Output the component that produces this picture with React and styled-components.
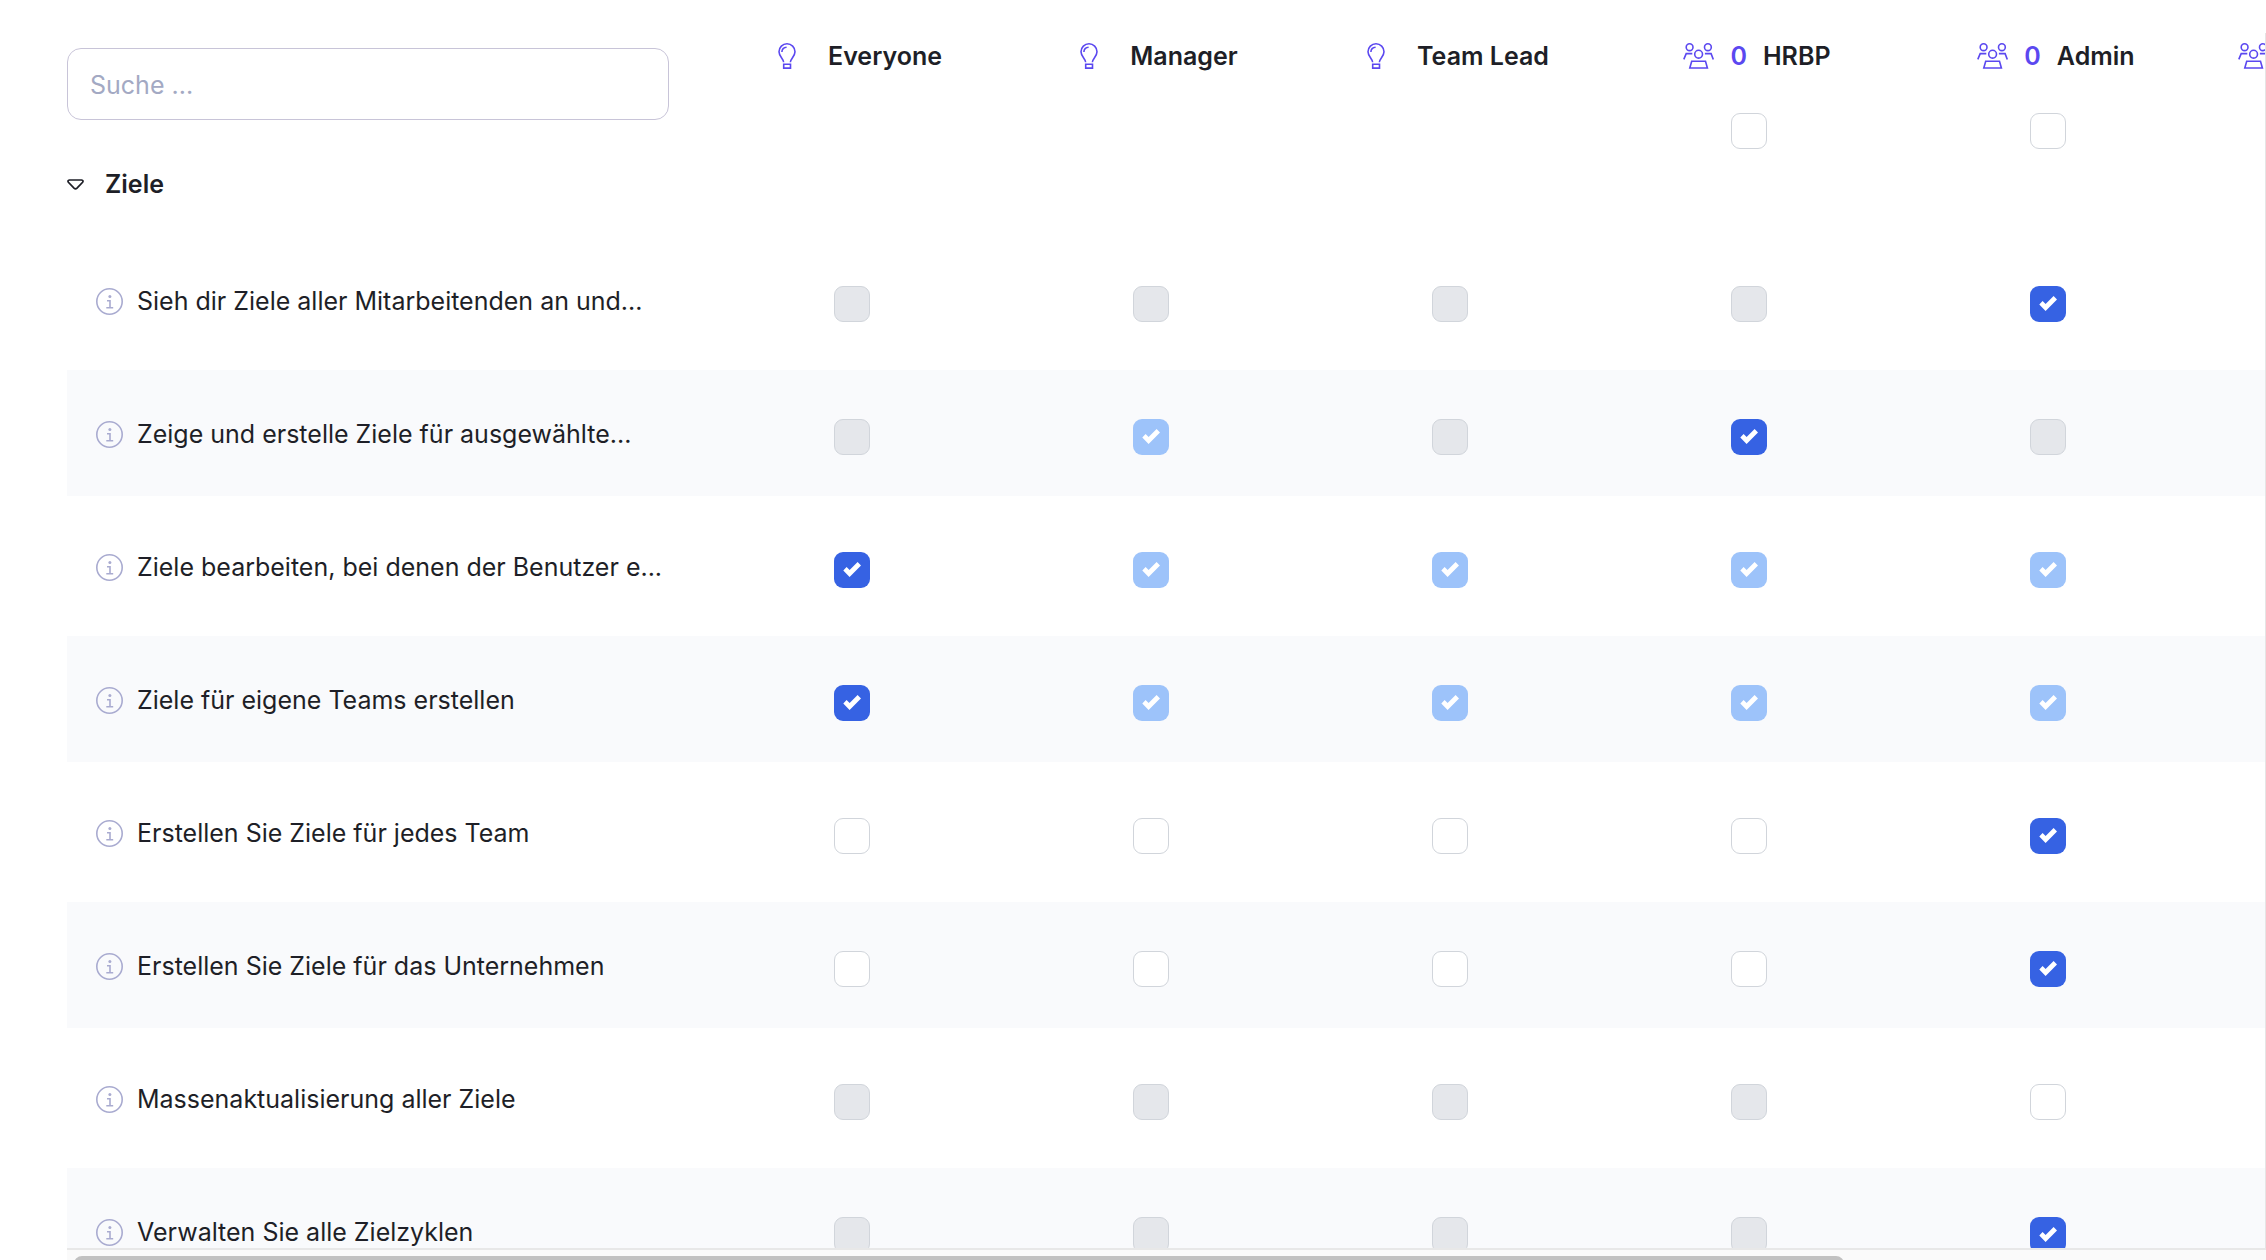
import React, {useState} from "react";
//Styled
import styled, {createGlobalStyle} from "styled-components";

//cell states: on / off can be changed, lockedOn / lockedOff are inherited
const roles = [
    {id: "everyone", name: "Everyone", type: "default"},
    {id: "manager", name: "Manager", type: "default"},
    {id: "teamlead", name: "Team Lead", type: "default"},
    {id: "hrbp", name: "HRBP", type: "custom", count: 0},
    {id: "admin", name: "Admin", type: "custom", count: 0},
    {id: "assistant", name: "HR Assistant", type: "custom", count: 0},
];

const permissions = [
    {
        name: "Sieh dir Ziele aller Mitarbeitenden an und...",
        cells: ["lockedOff", "lockedOff", "lockedOff", "lockedOff", "on", "off"],
    },
    {
        name: "Zeige und erstelle Ziele für ausgewählte...",
        cells: ["lockedOff", "lockedOn", "lockedOff", "on", "lockedOff", "off"],
    },
    {
        name: "Ziele bearbeiten, bei denen der Benutzer e...",
        cells: ["on", "lockedOn", "lockedOn", "lockedOn", "lockedOn", "lockedOn"],
    },
    {
        name: "Ziele für eigene Teams erstellen",
        cells: ["on", "lockedOn", "lockedOn", "lockedOn", "lockedOn", "lockedOn"],
    },
    {
        name: "Erstellen Sie Ziele für jedes Team",
        cells: ["off", "off", "off", "off", "on", "off"],
    },
    {
        name: "Erstellen Sie Ziele für das Unternehmen",
        cells: ["off", "off", "off", "off", "on", "off"],
    },
    {
        name: "Massenaktualisierung aller Ziele",
        cells: ["lockedOff", "lockedOff", "lockedOff", "lockedOff", "off", "off"],
    },
    {
        name: "Verwalten Sie alle Zielzyklen",
        cells: ["lockedOff", "lockedOff", "lockedOff", "lockedOff", "on", "off"],
    },
];

//Icons
const BulbIcon = () => (
    <svg width="18" height="26" viewBox="0 0 18 26" fill="none" stroke="currentColor" strokeWidth="1.6" aria-hidden="true">
        <path d="M5.600 19.200C5.400 15.600 1 13.400 1 8.800a8 8 0 0 1 16 0c0 4.600-4.400 6.800-4.600 10.400" />
        <path d="M3.900 9c.1-2.600 2-4.600 4.700-4.800" />
        <path d="M5.700 21.200h6.800v3.900H5.700z" />
    </svg>
);

const GroupIcon = () => (
    <svg width="31" height="26" viewBox="0 0 31 26" fill="none" stroke="currentColor" strokeWidth="1.6" aria-hidden="true">
        <circle cx="6.6" cy="4.2" r="3.4" />
        <circle cx="24.9" cy="4.2" r="3.4" />
        <circle cx="15.6" cy="11.2" r="3.9" />
        <path d="M9.300 10.600H3.200L.8 16.400" />
        <path d="M21.900 10.600h6.200l2.200 5.800" />
        <path d="M8.700 18.300h13.800l1.900 6.700H6.800z" />
    </svg>
);

const InfoIcon = () => (
    <svg width="27" height="27" viewBox="0 0 27 27" fill="none" stroke="currentColor" strokeWidth="1.6" aria-hidden="true">
        <circle cx="13.5" cy="13.5" r="12.7" />
        <path d="M11 12.800h3v6.800M10.300 19.700h6.900" />
        <circle cx="13.9" cy="8.4" r="1.5" fill="currentColor" stroke="none" />
    </svg>
);

const TriangleIcon = () => (
    <svg width="17" height="11" viewBox="0 0 17 11" fill="none" stroke="currentColor" strokeWidth="1.7" aria-hidden="true">
        <path d="M2.400 1h12.200q2.200.5 1 2.300L10 9.200q-1.500 1.400-3 0L1.400 3.300Q.2 1.500 2.400 1z" />
    </svg>
);

const App = () => {
    const [search, setSearch] = useState("");
    const [open, setOpen] = useState(true);

    const rows = permissions.filter((permission) =>
        permission.name.toLowerCase().includes(search.toLowerCase())
    );

    return(
        <>
        <GlobalStyle />
        <Page>
            <Viewport>
                <Table>
                    <colgroup>
                        <NameCol />
                        {roles.map(role => <RoleCol key={role.id} />)}
                    </colgroup>
                    <thead>
                        <HeadRow>
                            <SearchCell>
                                <Search
                                type="search"
                                aria-label="Suche"
                                placeholder="Suche ..."
                                value={search}
                                onChange={(e) => setSearch(e.target.value)} />
                            </SearchCell>
                            {roles.map(role => (
                                <RoleCell key={role.id} scope="col">
                                    <Role>
                                        {role.type === "custom" ? <GroupIcon /> : <BulbIcon />}
                                        <Count>{role.count}</Count>
                                        <span>{role.name}</span>
                                    </Role>
                                    {role.type === "custom" && (
                                        <Checkbox aria-label={`Alle Rechte für ${role.name}`} />
                                    )}
                                </RoleCell>
                            ))}
                        </HeadRow>
                    </thead>
                    <tbody>
                        <GroupRow>
                            <th scope="rowgroup" colSpan={roles.length + 1}>
                                <GroupToggle type="button" aria-expanded={open} onClick={() => setOpen(!open)}>
                                    <TriangleIcon />
                                    Ziele
                                </GroupToggle>
                            </th>
                        </GroupRow>
                        {open && rows.map((permission, index) => (
                            <PermissionRow key={permission.name} $striped={index % 2 === 1}>
                                <th scope="row">
                                    <PermissionName>
                                        <InfoIcon />
                                        {permission.name}
                                    </PermissionName>
                                </th>
                                {permission.cells.map((state, i) => (
                                    <td key={roles[i].id}>
                                        <Checkbox
                                        aria-label={`${permission.name} ${roles[i].name}`}
                                        defaultChecked={state === "on" || state === "lockedOn"}
                                        disabled={state.startsWith("locked")} />
                                    </td>
                                ))}
                            </PermissionRow>
                        ))}
                    </tbody>
                </Table>
            </Viewport>
            <ScrollTrack aria-hidden="true">
                <ScrollThumb />
            </ScrollTrack>
        </Page>
        </>
    )
}

const GlobalStyle = createGlobalStyle`
    *{
        box-sizing: border-box;
    }
    body{
        margin: 0;
        background: #ffffff;
        color: #1e1f27;
        font-family: Inter, "Liberation Sans", sans-serif;
        font-size: 25px;
        line-height: 30px;
    }
`;

const Page = styled.main`
    display: flex;
    flex-direction: column;
    height: 100vh;
    padding: 33px 0 0 67px;
`;

const Viewport = styled.div`
    flex: 1;
    min-height: 0;
    overflow: hidden;
    border-right: 1px solid #e5e5e5;
`;

const Table = styled.table`
    table-layout: fixed;
    width: max-content;
    min-width: 100%;
    border-collapse: separate;
    border-spacing: 0 7px;
    th, td{
        padding: 0;
    }
`;

const NameCol = styled.col`
    width: 635px;
`;

const RoleCol = styled.col`
    width: 299px;
`;

const HeadRow = styled.tr`
    height: 110px;
    vertical-align: top;
`;

const SearchCell = styled.td`
    && {
        padding: 8px 33px 0 0;
    }
`;

const Search = styled.input`
    display: block;
    width: 100%;
    height: 72px;
    padding: 2px 22px 0;
    border: 1px solid #c8c4d8;
    border-radius: 14px;
    background: #ffffff;
    color: inherit;
    font: inherit;
    appearance: none;
    &::placeholder{
        color: #a3a9c3;
        opacity: 1;
    }
`;

const RoleCell = styled.th`
    font-weight: 600;
`;

const Role = styled.div`
    display: flex;
    align-items: center;
    justify-content: center;
    gap: 16px;
    height: 32px;
    margin-bottom: 41px;
    padding-left: 17px;
    white-space: nowrap;
    svg{
        flex: none;
        color: #5b48f0;
    }
`;

const Count = styled.span`
    color: #5b48f0;
`;

const checkmark = `url("data:image/svg+xml,%3Csvg xmlns='http://www.w3.org/2000/svg' viewBox='0 0 36 36'%3E%3Cpath fill='white' d='M9.300 18.500l3.300-3.400 3 2.800 8-8 3.400 3.500L15.600 25z'/%3E%3C/svg%3E")`;

const Checkbox = styled.input.attrs({type: "checkbox"})`
    display: block;
    width: 36px;
    height: 36px;
    margin: 0 auto;
    border: 1px solid #d1d5db;
    border-radius: 9px;
    background: #ffffff;
    appearance: none;
    &:disabled{
        background: #e5e7eb;
    }
    &:checked{
        border: none;
        background: #3662e3 ${checkmark} center / 36px;
    }
    &:checked:disabled{
        background-color: #9dc3fa;
    }
`;

const GroupRow = styled.tr`
    height: 73px;
    text-align: left;
    vertical-align: top;
    && th{
        padding-top: 12px;
    }
`;

const GroupToggle = styled.button`
    display: flex;
    align-items: center;
    gap: 21px;
    padding: 0;
    border: none;
    background: none;
    color: inherit;
    font: inherit;
    font-weight: 600;
`;

const PermissionRow = styled.tr`
    height: 126px;
    background: ${({$striped}) => ($striped ? "#f9fafc" : "#ffffff")};
    && th{
        padding-top: 2px;
    }
    && td{
        padding-top: 8px;
    }
`;

const PermissionName = styled.div`
    display: flex;
    align-items: center;
    gap: 14px;
    padding-left: 29px;
    font-weight: 400;
    white-space: nowrap;
    svg{
        flex: none;
        color: #a9abd0;
    }
`;

const ScrollTrack = styled.div`
    height: 12px;
    padding: 6px 7px 0;
    overflow: hidden;
    border-top: 2px solid #e8e8e8;
    background: #fafafa;
`;

const ScrollThumb = styled.div`
    width: 81%;
    height: 16px;
    border-radius: 8px;
    background: #c1c1c1;
`;

export default App;
